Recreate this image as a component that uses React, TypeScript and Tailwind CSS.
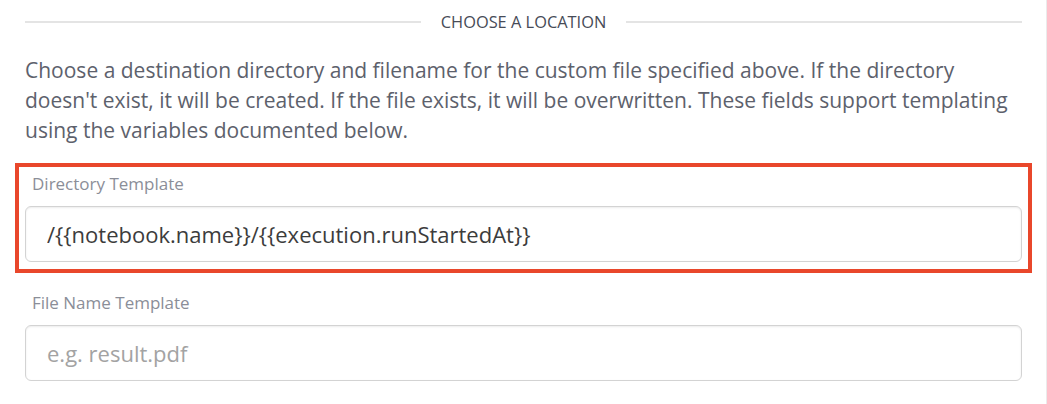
import React from 'react';

const font = { fontFamily: '"Open Sans", "Noto Sans", sans-serif' };

interface FieldProps {
  label: string;
  value?: string;
  placeholder?: string;
}

const Field: React.FC<FieldProps> = ({ label, value, placeholder }) => (
  <div>
    <label className="block pl-[7px] text-[17px] leading-[20px] text-[#8b8e98]">{label}</label>
    <input
      readOnly
      defaultValue={value}
      placeholder={placeholder}
      className="mt-[12px] block h-[56px] w-full rounded-[6px] border border-[#d3d3d3] bg-white px-[21px] text-[22px] text-[#3c3c3c] shadow-[inset_0_1px_2px_rgba(0,0,0,0.08)] outline-none placeholder:text-[#a3a3a3]"
    />
  </div>
);

export default function App() {
  return (
    <div style={font} className="h-[404px] w-[1047px] overflow-hidden border-r border-[#ebebeb] bg-white">
      <div className="w-[1022px] pl-[25px] pt-[12px]">
        <div className="flex items-center">
          <div className="h-[2px] flex-1 bg-[#e4e4e4]" />
          <div className="px-[20px] text-[16.4px] leading-[20px] text-[#474b57]">CHOOSE A LOCATION</div>
          <div className="h-[2px] flex-1 bg-[#e4e4e4]" />
        </div>

        <p className="mt-[23px] text-[21px] leading-[30px] text-[#5d616c]">
          Choose a destination directory and filename for the custom file specified above. If the directory
          doesn't exist, it will be created. If the file exists, it will be overwritten. These fields support
          templating using the variables documented below.
        </p>

        <div className="mx-[-10px] mt-[18px] border-4 border-[#e9472b] px-[6px] pb-[7px] pt-[7px]">
          <Field label="Directory Template" value="/{{notebook.name}}/{{execution.runStartedAt}}" />
        </div>

        <div className="mt-[20px]">
          <Field label="File Name Template" placeholder="e.g. result.pdf" />
        </div>
      </div>
    </div>
  );
}
